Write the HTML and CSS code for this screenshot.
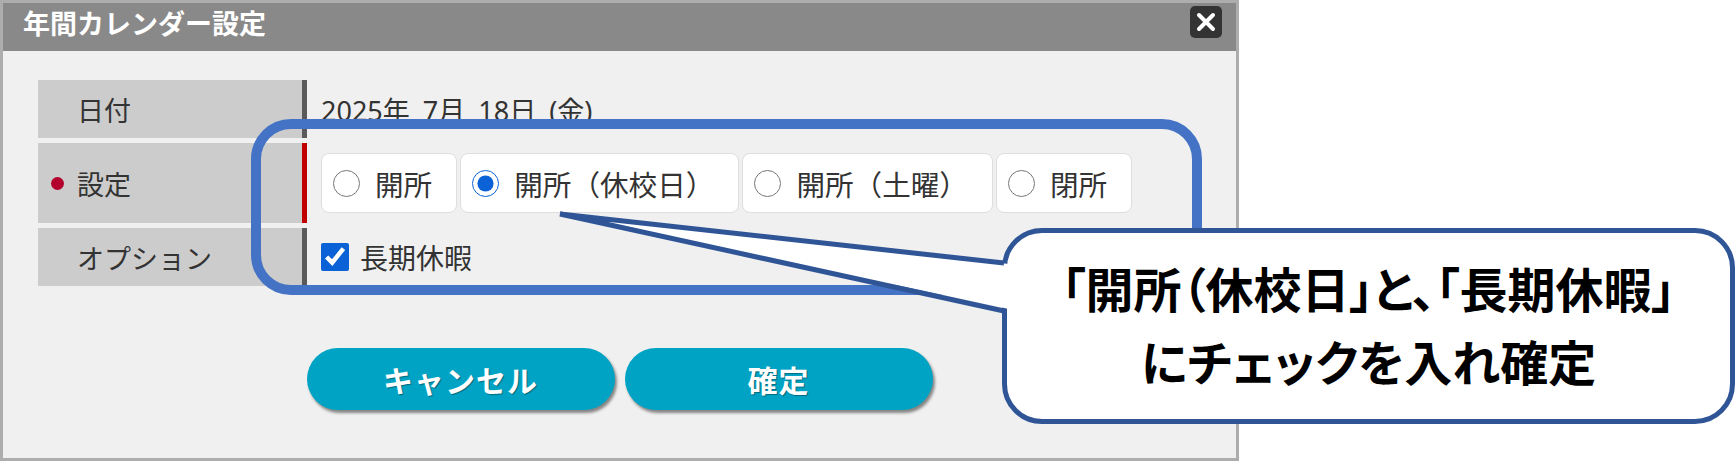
FILE: index.html
```html
<!DOCTYPE html>
<html lang="ja">
<head>
    <meta charset="UTF-8">
    <title>年間カレンダー設定</title>
    <link rel="stylesheet" href="styles.css">
</head>
<body>
<div class="stage">

    <div class="dialog">
        <div class="dialog-head">
            <span class="dialog-title">年間カレンダー設定</span>
            <button class="close-btn" type="button">
                <svg width="32" height="32" viewBox="0 0 32 32">
                    <path d="M9 9 L23 23 M23 9 L9 23" stroke="#fff" stroke-width="4" stroke-linecap="round"/>
                </svg>
            </button>
        </div>

        <div class="dialog-body">
            <div class="form">
                <div class="row">
                    <div class="label">日付</div>
                    <div class="value date">2025年 7月 18日 (金)</div>
                </div>
                <div class="row row-req">
                    <div class="label"><span class="req-dot"></span>設定</div>
                    <div class="value options">
                        <label class="opt"><input type="radio" name="kind">開所</label>
                        <label class="opt"><input type="radio" name="kind" checked>開所（休校日）</label>
                        <label class="opt"><input type="radio" name="kind">開所（土曜）</label>
                        <label class="opt"><input type="radio" name="kind">閉所</label>
                    </div>
                </div>
                <div class="row">
                    <div class="label">オプション</div>
                    <div class="value">
                        <label class="check"><input type="checkbox" checked>長期休暇</label>
                    </div>
                </div>
            </div>

            <div class="actions">
                <button class="btn" type="button">キャンセル</button>
                <button class="btn" type="button">確定</button>
            </div>
        </div>
    </div>

    <!-- 注釈 -->
    <div class="note-frame"></div>
    <div class="callout">「開所（休校日」と、「長期休暇」<br>にチェックを入れ確定</div>
    <svg class="callout-tail" width="1736" height="461" viewBox="0 0 1736 461">
        <polygon points="560,214 1009,264 1009,309" fill="#fff"/>
        <polyline points="1004,263 560,214 1004,311" fill="none" stroke="#2f5597" stroke-width="5"/>
    </svg>

</div>
</body>
</html>
```

FILE: styles.css
```css
body {
    margin: 0;
    background: #fff;
    font-family: "Noto Sans", "Noto Sans CJK JP", sans-serif;
    color: #333;
}
.stage {
    position: relative;
    width: 1736px;
    height: 461px;
    overflow: hidden;
}
.dialog {
    width: 1239px;
    height: 461px;
    box-sizing: border-box;
    border: 3px solid #adadad;
    background-color: #f0f0f0;
    display: flex;
    flex-direction: column;
}
.dialog-head {
    height: 48px;
    background-color: #898989;
    display: flex;
    justify-content: space-between;
    align-items: flex-start;
    padding: 0 14px 0 20px;
}
.dialog-title {
    color: white;
    font-family: "Noto Sans CJK JP", sans-serif;
    font-weight: bold;
    font-size: 27px;
    line-height: 40px;
}
.close-btn {
    margin-top: 3px;
    width: 32px;
    height: 32px;
    padding: 0;
    border: none;
    border-radius: 5px;
    background-color: #333;
}
.close-btn svg {
    display: block;
}
.dialog-body {
    flex: 1;
    padding-top: 29px;
}
.form {
    display: flex;
    flex-direction: column;
    gap: 5px;
    padding-left: 35px;
}
.row {
    display: flex;
    height: 58px;
}
.row-req {
    height: 80px;
}
.label {
    width: 269px;
    box-sizing: border-box;
    background-color: #cccccc;
    border-right: 5px solid #5a5a5a;
    padding-left: 39px;
    display: flex;
    align-items: center;
    font-family: "Noto Sans CJK JP", sans-serif;
    font-size: 27px;
}
.row-req .label {
    border-right-color: #c00000;
}
.req-dot {
    width: 13px;
    height: 13px;
    border-radius: 50%;
    background-color: #b3002d;
    margin-left: -26px;
    margin-right: 13px;
}
.value {
    flex: 1;
    padding-left: 14px;
    display: flex;
    align-items: center;
    font-size: 27px;
}
.date {
    word-spacing: 6px;
}
.options {
    gap: 3px;
}
.opt {
    height: 60px;
    box-sizing: border-box;
    background-color: white;
    border: 1px solid #dedede;
    border-radius: 8px;
    padding: 0 24px 0 11px;
    display: flex;
    align-items: center;
    font-family: "Noto Sans CJK JP", sans-serif;
    font-size: 28.6px;
}
.opt input {
    width: 27px;
    height: 27px;
    margin: 0 15px 0 0;
    accent-color: #0b62d6;
}
.check {
    display: flex;
    align-items: center;
    font-family: "Noto Sans CJK JP", sans-serif;
    font-size: 28px;
}
.check input {
    width: 28px;
    height: 28px;
    margin: 0 11px 0 0;
    accent-color: #0b62d6;
}
.actions {
    display: flex;
    justify-content: center;
    gap: 10px;
    margin-top: 62px;
}
.btn {
    width: 308px;
    height: 62px;
    border: none;
    border-radius: 31px;
    background-color: #00a3c4;
    box-shadow: 2px 3px 3px rgba(0, 0, 0, 0.45);
    color: white;
    font-family: "Noto Sans CJK JP", sans-serif;
    font-weight: bold;
    font-size: 30px;
    letter-spacing: 1px;
    text-shadow: 1px 1px 1px rgba(0, 0, 0, 0.35);
}

/* 注釈 */
.note-frame {
    position: absolute;
    left: 251px;
    top: 119px;
    width: 951px;
    height: 176px;
    box-sizing: border-box;
    border: 10px solid #4472c4;
    border-radius: 40px;
}
.callout {
    position: absolute;
    left: 1002px;
    top: 228px;
    width: 733px;
    height: 196px;
    box-sizing: border-box;
    border: 5px solid #2f5597;
    border-radius: 40px;
    background-color: white;
    padding-top: 18px;
    text-align: center;
    color: black;
    font-family: "Noto Sans CJK JP", sans-serif;
    font-weight: bold;
    font-size: 48px;
    line-height: 73px;
    font-feature-settings: "palt";
}
.callout-tail {
    position: absolute;
    left: 0;
    top: 0;
    pointer-events: none;
}
```
